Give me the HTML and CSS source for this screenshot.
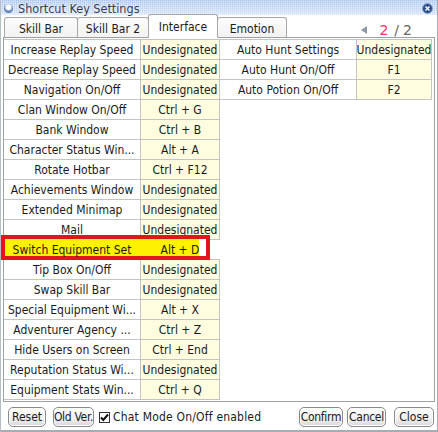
FILE: index.html
```html
<!DOCTYPE html>
<html>
<head>
<meta charset="utf-8">
<link rel="stylesheet" href="styles.css">
</head>
<body>
<div class="window">
  <div class="titlebar">
    <span class="ticon"></span>
    <span class="ttext">Shortcut Key Settings</span>
    <span class="tclose"><svg width="11" height="11" viewBox="0 0 11 11"><circle cx="5.5" cy="5.5" r="5" fill="#2d4f86" stroke="#8aa6d6" stroke-width="1"/><path d="M3.5 3.5 L7.5 7.5 M7.5 3.5 L3.5 7.5" stroke="#fff" stroke-width="1.4"/></svg></span>
  </div>
  <div class="tabbar">
    <div class="tab t1">Skill Bar</div>
    <div class="tab t2">Skill Bar 2</div>
    <div class="tab t3 active">Interface</div>
    <div class="tab t4">Emotion</div>
    <div class="pager"><span class="tri"></span><span class="cur">2</span><span class="sl">/</span><span class="tot">2</span></div>
  </div>
  <div class="panel">
    <div class="tbl left">
      <div class="row"><div class="lab">Increase Replay Speed</div><div class="val">Undesignated</div></div>
      <div class="row"><div class="lab">Decrease Replay Speed</div><div class="val">Undesignated</div></div>
      <div class="row"><div class="lab">Navigation On/Off</div><div class="val">Undesignated</div></div>
      <div class="row"><div class="lab">Clan Window On/Off</div><div class="val">Ctrl + G</div></div>
      <div class="row"><div class="lab">Bank Window</div><div class="val">Ctrl + B</div></div>
      <div class="row"><div class="lab">Character Status Win...</div><div class="val">Alt + A</div></div>
      <div class="row"><div class="lab">Rotate Hotbar</div><div class="val">Ctrl + F12</div></div>
      <div class="row"><div class="lab">Achievements Window</div><div class="val">Undesignated</div></div>
      <div class="row"><div class="lab">Extended Minimap</div><div class="val">Undesignated</div></div>
      <div class="row"><div class="lab">Mail</div><div class="val">Undesignated</div></div>
      <div class="row hl"><div class="mark"></div><div class="lab"><span>Switch Equipment Set</span></div><div class="val"><span>Alt + D</span></div></div>
      <div class="row"><div class="lab">Tip Box On/Off</div><div class="val">Undesignated</div></div>
      <div class="row"><div class="lab">Swap Skill Bar</div><div class="val">Undesignated</div></div>
      <div class="row"><div class="lab">Special Equipment Wi...</div><div class="val">Alt + X</div></div>
      <div class="row"><div class="lab">Adventurer Agency ...</div><div class="val">Ctrl + Z</div></div>
      <div class="row"><div class="lab">Hide Users on Screen</div><div class="val">Ctrl + End</div></div>
      <div class="row"><div class="lab">Reputation Status Wi...</div><div class="val">Undesignated</div></div>
      <div class="row"><div class="lab">Equipment Stats Win...</div><div class="val">Ctrl + Q</div></div>
    </div>
    <div class="tbl right">
      <div class="row"><div class="lab">Auto Hunt Settings</div><div class="val">Undesignated</div></div>
      <div class="row"><div class="lab">Auto Hunt On/Off</div><div class="val">F1</div></div>
      <div class="row"><div class="lab">Auto Potion On/Off</div><div class="val">F2</div></div>
    </div>
  </div>
  <div class="footer">
    <button class="btn b-reset">Reset</button>
    <button class="btn b-old">Old Ver.</button>
    <span class="chk"><svg width="11" height="11" viewBox="0 0 11 11"><rect x="0.5" y="0.5" width="10" height="10" fill="#fff" stroke="#333"/><path d="M2 5.5 L4.3 8 L9 2.5" fill="none" stroke="#111" stroke-width="2"/></svg></span>
    <span class="chktext">Chat Mode On/Off enabled</span>
    <span class="spacer"></span>
    <button class="btn b-confirm">Confirm</button>
    <button class="btn b-cancel">Cancel</button>
    <button class="btn b-close">Close</button>
  </div>
</div>
</body>
</html>
```
FILE: styles.css
```css
* { box-sizing: border-box; }
html, body { margin: 0; padding: 0; background: #fff; }
body {
  font-family: "DejaVu Sans Condensed", "DejaVu Sans", "Liberation Sans", sans-serif;
  font-size: 12px;
  color: #1a1a1a;
}
.window {
  width: 438px;
  height: 432px;
  border-left: 1px solid #b8bcc4;
  border-right: 1px solid #a8acb4;
  border-bottom: 2px solid #a8acb4;
  background: #fff;
  display: flex;
  flex-direction: column;
}
.titlebar {
  height: 15px;
  display: flex;
  align-items: center;
  background:
    repeating-linear-gradient(90deg, rgba(255,255,255,0.35) 0 1px, transparent 1px 2px),
    repeating-linear-gradient(0deg, rgba(255,255,255,0.25) 0 1px, transparent 1px 2px),
    linear-gradient(#a9c5ee, #cfe0f8);
  border-bottom: 1px solid #e4ecf8;
  position: relative;
}
.ticon {
  width: 9px; height: 9px;
  margin-left: 3px;
  margin-top: 3px;
  border-radius: 50%;
  background: radial-gradient(circle at 50% 35%, #fff 0 30%, #6f8fc4 55%, #36588f 100%);
}
.ttext {
  margin-left: 5px;
  font-size: 12.5px;
  line-height: 15px;
  color: #2b3650;
  text-shadow: 0 0 2px #fff, 0 0 1px #fff;
  margin-top: 2px;
}
.tclose {
  margin-left: auto;
  margin-right: 4px;
  margin-top: 3px;
  display: flex;
}
.tabbar {
  height: 23px;
  display: flex;
  align-items: flex-end;
  padding-left: 3px;
}
.tab {
  height: 21px;
  border: 1px solid #a8a8a8;
  border-bottom: none;
  border-radius: 3px 3px 0 0;
  background: linear-gradient(#fcfcfc, #f2f2f2);
  display: flex;
  align-items: center;
  justify-content: center;
  margin-right: -1px;
  padding-top: 1px;
}
.t1 { width: 74px; }
.t2 { width: 72px; }
.t3 { width: 70px; }
.t4 { width: 70px; }
.tab.active {
  height: 24px;
  background: #fff;
  padding-top: 0;
  position: relative;
  z-index: 1;
}
.pager {
  margin-left: auto;
  margin-right: 25px;
  align-self: center;
  display: flex;
  align-items: center;
  font-family: "DejaVu Sans", "Liberation Sans", sans-serif;
  font-size: 14px;
  color: #666;
  padding-top: 6px;
}
.tri {
  width: 0; height: 0;
  border-top: 4px solid transparent;
  border-bottom: 4px solid transparent;
  border-right: 6px solid #8c98a8;
  margin-right: 12px;
}
.cur { color: #f0306e; margin-right: 6px; }
.sl { margin-right: 4px; }
.panel {
  height: 365px;
  margin-left: 2px;
  width: 432px;
  border: 1px solid #a0a0a0;
  display: flex;
  align-items: flex-start;
  padding-top: 1px;
  margin-top: -1px;
}
.tbl {
  border-top: 1px solid #c4c4c4;
  display: flex;
  flex-direction: column;
}
.row {
  height: 20px;
  display: flex;
  border-bottom: 1px solid #c4c4c4;
  position: relative;
}
.lab, .val {
  display: flex;
  align-items: center;
  justify-content: center;
  white-space: nowrap;
  overflow: hidden;
  border-right: 1px solid #c4c4c4;
  padding-top: 1px;
}
.val { background: #fefde0; }
.left .lab { width: 137px; }
.left .val { width: 79px; }
.right .lab { width: 137px; }
.right .val { width: 75px; }
.hl .lab, .hl .val { position: relative; z-index: 2; background: transparent; border-right-color: transparent; }
.hl .mark {
  position: absolute;
  left: -3px;
  top: -5px;
  width: 209px;
  height: 25px;
  border: 4px solid #e2141e;
  background: linear-gradient(90deg, #fff200 0 calc(100% - 7px), #fff calc(100% - 7px));
  z-index: 1;
}
.footer {
  flex: 1;
  display: flex;
  align-items: center;
  padding-left: 7px;
  padding-right: 3px;
  padding-top: 2px;
}
.btn {
  font-family: inherit;
  font-size: 12px;
  color: #1a1a1a;
  height: 20px;
  padding: 0;
  border: 1px solid #8a8a8a;
  border-radius: 5px;
  background: linear-gradient(#ffffff, #f0f0f0 60%, #d8d8d8);
  box-shadow: inset 0 0 0 1px #fff;
  line-height: 17px;
  white-space: nowrap;
  overflow: hidden;
  display: flex;
  align-items: center;
  justify-content: center;
}
.b-reset { width: 38px; }
.b-old { width: 41px; margin-left: 7px; letter-spacing: -0.3px; }
.chk { display: flex; margin-left: 5px; }
.chktext { margin-left: 3px; letter-spacing: 0.2px; }
.spacer { flex: 1; }
.b-confirm { width: 44px; letter-spacing: -0.3px; }
.b-cancel { width: 39px; margin-left: 4px; letter-spacing: -0.3px; }
.b-close { width: 40px; margin-left: 8px; }
```
